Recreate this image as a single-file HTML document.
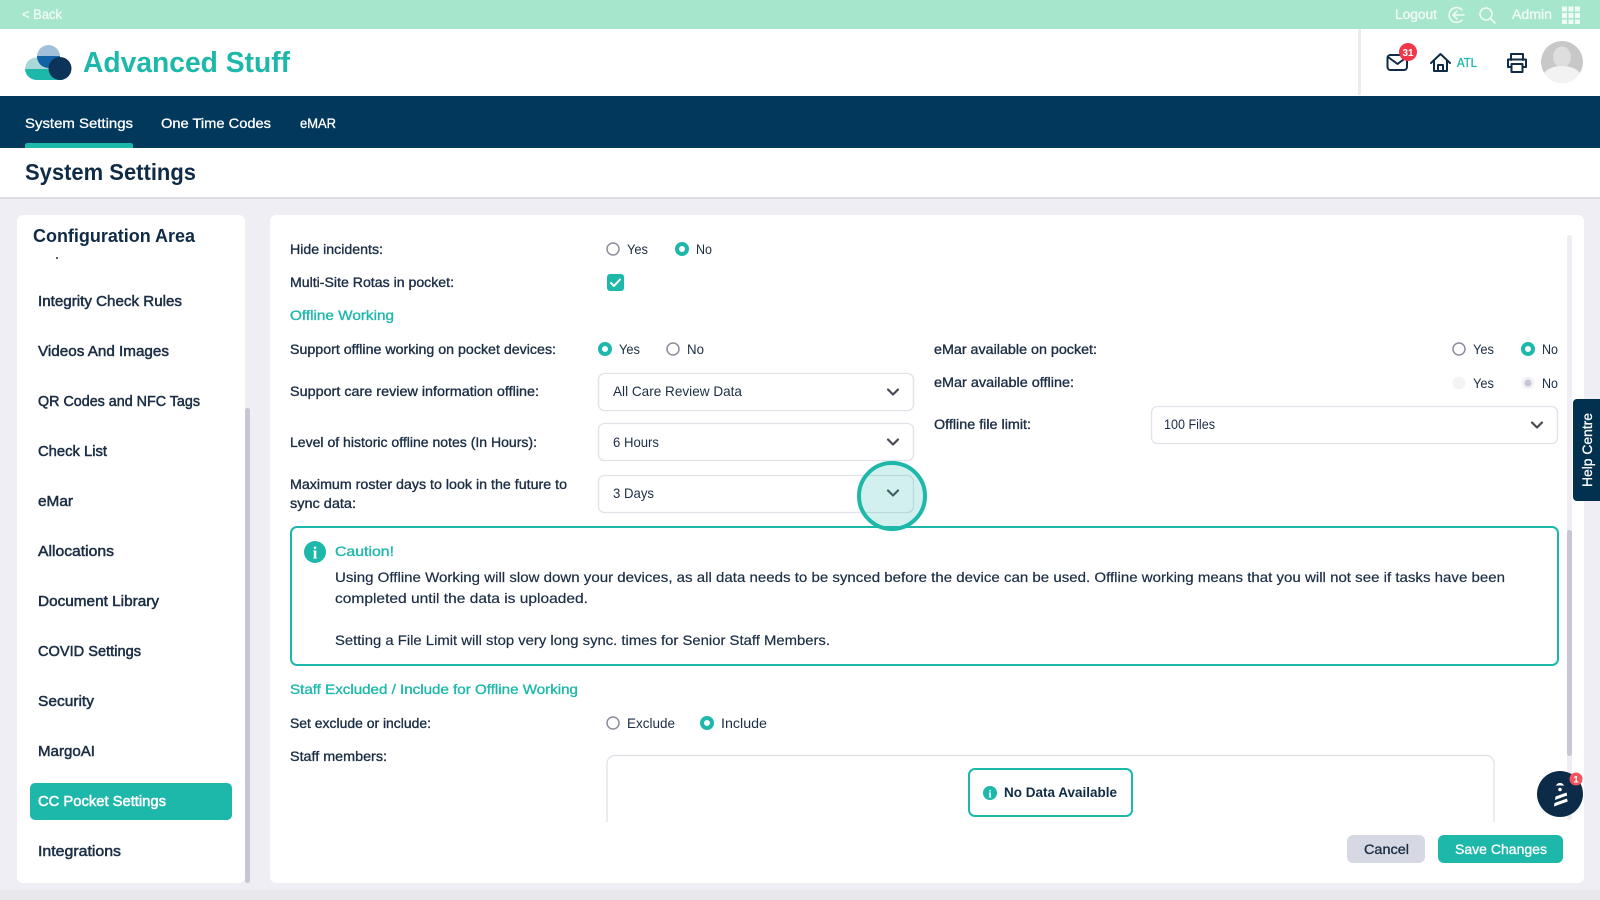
<!DOCTYPE html>
<html><head><meta charset="utf-8"><title>System Settings</title>
<style>
html,body{margin:0;padding:0;background:#eeeef4;width:1600px;height:900px;overflow:hidden}
svg{display:block}
text{font-family:"Liberation Sans",sans-serif;font-size:14px;fill:#1c2e45}
.m{stroke:#1c2e45;stroke-width:.35}
.b{font-weight:700}
.t{fill:#1db8aa;stroke:#1db8aa;stroke-width:.35}
.w{fill:#fff;stroke:#fff;stroke-width:.3}
.g{fill:#f0fbf6;stroke:#f0fbf6;stroke-width:.35;font-size:13.5px}
.r{font-size:13.5px}
.sb{font-size:14.5px}
.sb.m{stroke-width:.5}
.sb.w{stroke-width:.5}
.ri{fill:#fff;stroke:#8d8d9c;stroke-width:1.5}
.ra{fill:#fff;stroke:#1db8aa;stroke-width:4}
.sel{fill:#fff;stroke:#e2e2ea;stroke-width:1.3}
.ch{fill:none;stroke:#4a4a55;stroke-width:2.2;stroke-linecap:round;stroke-linejoin:round}
.ic{fill:none;stroke:#0f2b46;stroke-width:2;stroke-linecap:round;stroke-linejoin:round}
</style></head><body>
<svg width="1600" height="900" viewBox="0 0 1600 900" xmlns="http://www.w3.org/2000/svg">
<defs>
<clipPath id="tc"><rect x="30" y="56" width="40" height="14"/></clipPath>
<clipPath id="bx"><rect x="600" y="750" width="900" height="72"/></clipPath>
</defs>
<rect width="1600" height="900" fill="#eeeef4"/>
<rect y="890" width="1600" height="10" fill="#e8e8ec"/>

<!-- top bar -->
<rect width="1600" height="29" fill="#a5e6cc"/>
<text class="g" x="22" y="19" textLength="40" lengthAdjust="spacingAndGlyphs">&lt; Back</text>
<text class="g" x="1395" y="19" textLength="42" lengthAdjust="spacingAndGlyphs">Logout</text>
<g fill="none" stroke="#f0fbf6" stroke-width="1.6" stroke-linecap="round" stroke-linejoin="round">
<path d="M1462 10a7.4 7.4 0 1 0 0 10"/><path d="M1464 15h-11M1457 11l-4 4 4 4"/>
<circle cx="1486" cy="14" r="6"/><path d="M1490.500 18.500l4.500 4.500"/>
</g>
<text class="g" x="1512" y="19" textLength="40" lengthAdjust="spacingAndGlyphs">Admin</text>
<g fill="#f0fbf6">
<rect x="1562" y="6.500" width="5" height="5"/><rect x="1568.500" y="6.500" width="5" height="5"/><rect x="1575" y="6.500" width="5" height="5"/>
<rect x="1562" y="13" width="5" height="5"/><rect x="1568.500" y="13" width="5" height="5"/><rect x="1575" y="13" width="5" height="5"/>
<rect x="1562" y="19.500" width="5" height="4.500"/><rect x="1568.500" y="19.500" width="5" height="4.500"/><rect x="1575" y="19.500" width="5" height="4.500"/>
</g>

<!-- header -->
<rect y="29" width="1600" height="67" fill="#fff"/>
<rect x="1358" y="29" width="3" height="66" fill="#ebebf0"/>
<circle cx="48.500" cy="56.500" r="11.500" fill="#a2c0dc"/>
<path d="M25 69a11.500 11.500 0 0 1 11.500-11.500H60V69z" fill="#a8d8d8"/>
<path d="M25 69h38v11H36.500A11.500 11.500 0 0 1 25 69z" fill="#1db8aa"/>
<circle cx="48.500" cy="56.500" r="11.500" fill="#1262a6" clip-path="url(#tc)"/>
<circle cx="60" cy="68.500" r="11.500" fill="#0e3358"/>
<text x="83" y="72" class="b" style="font-size:29px;fill:#1db8aa" textLength="207" lengthAdjust="spacingAndGlyphs">Advanced Stuff</text>

<rect x="1387.500" y="55" width="19.500" height="15" rx="3" class="ic"/>
<path d="M1388 57l9.500 7 9.500-7" class="ic"/>
<circle cx="1408" cy="52" r="9" fill="#f0374a"/>
<text x="1402.500" y="56" class="b" style="font-size:10.500px;fill:#fff" textLength="11" lengthAdjust="spacingAndGlyphs">31</text>
<path d="M1431 63l9.500-9 9.500 9M1434 60.500V71h13V60.500M1438 71v-6h5v6" class="ic"/>
<text class="t" x="1457" y="67" style="font-size:12.500px" textLength="20" lengthAdjust="spacingAndGlyphs">ATL</text>
<path d="M1511 60v-6h12v6M1511.500 67H1508v-7.500h18V67h-3.500M1511.500 64h11v8h-11z" class="ic"/>
<circle cx="1562" cy="62" r="21" fill="#c8c8c8"/>
<ellipse cx="1562" cy="57" rx="9" ry="10.500" fill="#dedede"/>
<path d="M1544 73c4-5 11-7 18-7s14 2 18 7a21 21 0 0 1-36 0z" fill="#f2f2f2"/>

<!-- nav -->
<rect y="96" width="1600" height="52" fill="#02385c"/>
<text class="w" x="25" y="128" textLength="108" lengthAdjust="spacingAndGlyphs">System Settings</text>
<text class="w" x="161" y="128" textLength="110" lengthAdjust="spacingAndGlyphs">One Time Codes</text>
<text class="w" x="300" y="128" textLength="36" lengthAdjust="spacingAndGlyphs">eMAR</text>
<path d="M25 148v-2.500a2.500 2.500 0 0 1 2.500-2.500h103a2.500 2.500 0 0 1 2.500 2.500v2.500z" fill="#1db8aa"/>

<!-- title -->
<rect y="148" width="1600" height="49" fill="#fff"/>
<rect y="197" width="1600" height="2" fill="#ddddE6"/>
<text x="25" y="180" class="b" style="font-size:23px;fill:#0f2b46" textLength="171" lengthAdjust="spacingAndGlyphs">System Settings</text>

<!-- sidebar -->
<rect x="17" y="215" width="228" height="668" rx="6" fill="#fff"/>
<rect x="245" y="408" width="5" height="475" rx="2.500" fill="#c6c6d4"/>
<text x="33" y="242" class="b" style="font-size:18px;fill:#0f2b46" textLength="162" lengthAdjust="spacingAndGlyphs">Configuration Area</text>
<circle cx="57" cy="258" r="1" fill="#1c2e45"/>
<rect x="30" y="783" width="202" height="37" rx="5" fill="#1db8aa"/>
<g>
<text class="m sb" x="38" y="306" textLength="144" lengthAdjust="spacingAndGlyphs">Integrity Check Rules</text>
<text class="m sb" x="38" y="356" textLength="131" lengthAdjust="spacingAndGlyphs">Videos And Images</text>
<text class="m sb" x="38" y="406" textLength="162" lengthAdjust="spacingAndGlyphs">QR Codes and NFC Tags</text>
<text class="m sb" x="38" y="456" textLength="69" lengthAdjust="spacingAndGlyphs">Check List</text>
<text class="m sb" x="38" y="506" textLength="35" lengthAdjust="spacingAndGlyphs">eMar</text>
<text class="m sb" x="38" y="556" textLength="76" lengthAdjust="spacingAndGlyphs">Allocations</text>
<text class="m sb" x="38" y="606" textLength="121" lengthAdjust="spacingAndGlyphs">Document Library</text>
<text class="m sb" x="38" y="656" textLength="103" lengthAdjust="spacingAndGlyphs">COVID Settings</text>
<text class="m sb" x="38" y="706" textLength="56" lengthAdjust="spacingAndGlyphs">Security</text>
<text class="m sb" x="38" y="756" textLength="57" lengthAdjust="spacingAndGlyphs">MargoAI</text>
<text class="w sb" x="38" y="806" textLength="128" lengthAdjust="spacingAndGlyphs">CC Pocket Settings</text>
<text class="m sb" x="38" y="856" textLength="83" lengthAdjust="spacingAndGlyphs">Integrations</text>
</g>

<!-- main card -->
<rect x="270" y="215" width="1314" height="668" rx="6" fill="#fff"/>
<rect x="1567" y="235" width="5" height="585" rx="2.500" fill="#eeeef4"/>
<rect x="1567" y="530" width="5" height="226" rx="2.500" fill="#c6c6d4"/>

<text class="m r" x="290" y="254" textLength="93" lengthAdjust="spacingAndGlyphs">Hide incidents:</text>
<circle class="ri" cx="613" cy="249" r="6"/><text class="r" x="627" y="254" textLength="21" lengthAdjust="spacingAndGlyphs">Yes</text>
<circle class="ra" cx="682" cy="249" r="5"/><text class="r" x="696" y="254" textLength="16" lengthAdjust="spacingAndGlyphs">No</text>

<text class="m r" x="290" y="287" textLength="164" lengthAdjust="spacingAndGlyphs">Multi-Site Rotas in pocket:</text>
<rect x="607" y="274" width="17" height="17" rx="3" fill="#1db8aa"/>
<path d="M611 283l3 3 6-6.500" fill="none" stroke="#fff" stroke-width="2" stroke-linecap="round" stroke-linejoin="round"/>

<text class="t" x="290" y="320" textLength="104" lengthAdjust="spacingAndGlyphs">Offline Working</text>

<text class="m r" x="290" y="354" textLength="266" lengthAdjust="spacingAndGlyphs">Support offline working on pocket devices:</text>
<circle class="ra" cx="605" cy="349" r="5"/><text class="r" x="619" y="354" textLength="21" lengthAdjust="spacingAndGlyphs">Yes</text>
<circle class="ri" cx="673" cy="349" r="6"/><text class="r" x="687" y="354" textLength="17" lengthAdjust="spacingAndGlyphs">No</text>

<text class="m r" x="290" y="396" textLength="249" lengthAdjust="spacingAndGlyphs">Support care review information offline:</text>
<rect class="sel" x="598.500" y="373.500" width="315" height="37" rx="6"/>
<text x="613" y="396" textLength="129" lengthAdjust="spacingAndGlyphs">All Care Review Data</text>
<path class="ch" d="M888 389.500l5 5 5-5"/>

<text class="m r" x="290" y="447" textLength="247" lengthAdjust="spacingAndGlyphs">Level of historic offline notes (In Hours):</text>
<rect class="sel" x="598.500" y="423.500" width="315" height="37" rx="6"/>
<text x="613" y="447" textLength="46" lengthAdjust="spacingAndGlyphs">6 Hours</text>
<path class="ch" d="M888 439.500l5 5 5-5"/>

<text class="m r" x="290" y="489" textLength="277" lengthAdjust="spacingAndGlyphs">Maximum roster days to look in the future to</text>
<text class="m r" x="290" y="508" textLength="66" lengthAdjust="spacingAndGlyphs">sync data:</text>
<rect class="sel" x="598.500" y="475.500" width="315" height="37" rx="6"/>
<text x="613" y="498" textLength="41" lengthAdjust="spacingAndGlyphs">3 Days</text>
<path class="ch" d="M888 490.500l5 5 5-5"/>

<text class="m r" x="934" y="354" textLength="163" lengthAdjust="spacingAndGlyphs">eMar available on pocket:</text>
<circle class="ri" cx="1459" cy="349" r="6"/><text class="r" x="1473" y="354" textLength="21" lengthAdjust="spacingAndGlyphs">Yes</text>
<circle class="ra" cx="1528" cy="349" r="5"/><text class="r" x="1542" y="354" textLength="16" lengthAdjust="spacingAndGlyphs">No</text>

<text class="m r" x="934" y="387" textLength="140" lengthAdjust="spacingAndGlyphs">eMar available offline:</text>
<circle cx="1459" cy="383" r="6.500" fill="#f3f3f6"/><text class="r" x="1473" y="388" textLength="21" lengthAdjust="spacingAndGlyphs">Yes</text>
<circle cx="1528" cy="383" r="6.500" fill="#f3f3f6"/><circle cx="1528" cy="383" r="3.500" fill="#c6c6d8"/><text class="r" x="1542" y="388" textLength="16" lengthAdjust="spacingAndGlyphs">No</text>

<text class="m r" x="934" y="429" textLength="97" lengthAdjust="spacingAndGlyphs">Offline file limit:</text>
<rect class="sel" x="1151.500" y="406.500" width="406" height="37" rx="6"/>
<text x="1164" y="429" textLength="51" lengthAdjust="spacingAndGlyphs">100 Files</text>
<path class="ch" d="M1532 422.500l5 5 5-5"/>

<!-- caution -->
<rect x="291" y="527" width="1267" height="138" rx="6" fill="#fff" stroke="#1db8aa" stroke-width="2"/>
<circle cx="315" cy="552" r="11" fill="#1db8aa"/>
<text x="315" y="558.500" text-anchor="middle" style="font-family:'Liberation Serif',serif;font-size:17px;font-weight:700;fill:#fff">i</text>
<text class="t" x="335" y="556" textLength="59" lengthAdjust="spacingAndGlyphs">Caution!</text>
<text class="m" style="stroke-width:.2" x="335" y="582" textLength="1170" lengthAdjust="spacingAndGlyphs">Using Offline Working will slow down your devices, as all data needs to be synced before the device can be used. Offline working means that you will not see if tasks have been</text>
<text class="m" style="stroke-width:.2" x="335" y="603" textLength="253" lengthAdjust="spacingAndGlyphs">completed until the data is uploaded.</text>
<text class="m" style="stroke-width:.2" x="335" y="645" textLength="495" lengthAdjust="spacingAndGlyphs">Setting a File Limit will stop very long sync. times for Senior Staff Members.</text>

<!-- highlight ring, above the caution box -->
<circle cx="892" cy="496" r="33" fill="#1db8aa" fill-opacity=".2" stroke="#1db8aa" stroke-width="4"/>

<text class="t" x="290" y="694" textLength="288" lengthAdjust="spacingAndGlyphs">Staff Excluded / Include for Offline Working</text>

<text class="m r" x="290" y="728" textLength="141" lengthAdjust="spacingAndGlyphs">Set exclude or include:</text>
<circle class="ri" cx="613" cy="723" r="6"/><text class="r" x="627" y="728" textLength="48" lengthAdjust="spacingAndGlyphs">Exclude</text>
<circle class="ra" cx="707" cy="723" r="5"/><text class="r" x="721" y="728" textLength="46" lengthAdjust="spacingAndGlyphs">Include</text>

<text class="m r" x="290" y="761" textLength="97" lengthAdjust="spacingAndGlyphs">Staff members:</text>
<g clip-path="url(#bx)"><rect x="607" y="755.500" width="887" height="100" rx="8" fill="#fff" stroke="#e0e0e8" stroke-width="1.300"/></g>
<rect x="969" y="769" width="163" height="47" rx="6" fill="#fff" stroke="#1db8aa" stroke-width="2"/>
<circle cx="990" cy="793" r="7" fill="#1db8aa"/>
<text x="990" y="797.500" text-anchor="middle" style="font-family:'Liberation Serif',serif;font-size:11px;font-weight:700;fill:#fff">i</text>
<text class="b" style="font-size:13.500px;fill:#0f2b46" x="1004" y="797" textLength="113" lengthAdjust="spacingAndGlyphs">No Data Available</text>

<!-- buttons -->
<rect x="1347" y="835" width="78" height="28" rx="6" fill="#d6d8e4"/>
<text class="m" x="1364" y="854" textLength="45" lengthAdjust="spacingAndGlyphs">Cancel</text>
<rect x="1438" y="835" width="125" height="28" rx="6" fill="#1db8aa"/>
<text class="w" x="1455" y="854" textLength="92" lengthAdjust="spacingAndGlyphs">Save Changes</text>

<!-- help tab -->
<path d="M1600 399h-23a4 4 0 0 0-4 4v94a4 4 0 0 0 4 4h23z" fill="#02304f"/>
<text class="w" transform="translate(1592 487) rotate(-90)" x="0" y="0" textLength="74" lengthAdjust="spacingAndGlyphs">Help Centre</text>

<!-- chat -->
<circle cx="1560" cy="794" r="23" fill="#0b2b48"/>
<g fill="#fff">
<path d="M1555.500 785.500l3-2.500h3l3 2.500z"/>
<circle cx="1560" cy="789.500" r="1.800"/>
<path d="M1555.500 796.500l11-4 .7 3-12.200 4.500z"/>
<path d="M1554.500 803l12.500-4.500.7 3-13.700 5z"/>
</g>
<circle cx="1576" cy="779" r="6.500" fill="#f25560"/>
<text x="1576" y="782.500" text-anchor="middle" class="b" style="font-size:9.500px;fill:#fff">1</text>
</svg>
</body></html>
